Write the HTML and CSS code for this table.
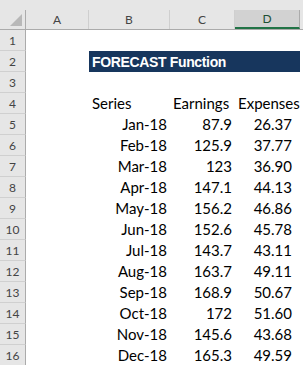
FILE: index.html
```html
<!DOCTYPE html>
<html>
<head>
<meta charset="utf-8">
<link rel="stylesheet" href="styles.css">
</head>
<body>
<div class="sheet">
  <div class="topband"></div>
  <div class="colheads">
    <div class="corner"><span class="tri"></span></div>
    <div class="ch">A</div>
    <div class="ch">B</div>
    <div class="ch">C</div>
    <div class="ch sel">D</div>
    <div class="ch end"></div>
  </div>
  <div class="row"><div class="rh">1</div></div>
  <div class="row"><div class="rh">2</div><div class="cell"></div><div class="banner">FORECAST Function</div></div>
  <div class="row"><div class="rh">3</div></div>
  <div class="row"><div class="rh">4</div><div class="cell"></div><div class="cell">Series</div><div class="cell">Earnings</div><div class="cell">Expenses</div></div>
  <div class="row"><div class="rh">5</div><div class="cell"></div><div class="cell r">Jan-18</div><div class="cell r">87.9</div><div class="cell r d">26.37</div></div>
  <div class="row"><div class="rh">6</div><div class="cell"></div><div class="cell r">Feb-18</div><div class="cell r">125.9</div><div class="cell r d">37.77</div></div>
  <div class="row"><div class="rh">7</div><div class="cell"></div><div class="cell r">Mar-18</div><div class="cell r">123</div><div class="cell r d">36.90</div></div>
  <div class="row"><div class="rh">8</div><div class="cell"></div><div class="cell r">Apr-18</div><div class="cell r">147.1</div><div class="cell r d">44.13</div></div>
  <div class="row"><div class="rh">9</div><div class="cell"></div><div class="cell r">May-18</div><div class="cell r">156.2</div><div class="cell r d">46.86</div></div>
  <div class="row"><div class="rh">10</div><div class="cell"></div><div class="cell r">Jun-18</div><div class="cell r">152.6</div><div class="cell r d">45.78</div></div>
  <div class="row"><div class="rh">11</div><div class="cell"></div><div class="cell r">Jul-18</div><div class="cell r">143.7</div><div class="cell r d">43.11</div></div>
  <div class="row"><div class="rh">12</div><div class="cell"></div><div class="cell r">Aug-18</div><div class="cell r">163.7</div><div class="cell r d">49.11</div></div>
  <div class="row"><div class="rh">13</div><div class="cell"></div><div class="cell r">Sep-18</div><div class="cell r">168.9</div><div class="cell r d">50.67</div></div>
  <div class="row"><div class="rh">14</div><div class="cell"></div><div class="cell r">Oct-18</div><div class="cell r">172</div><div class="cell r d">51.60</div></div>
  <div class="row"><div class="rh">15</div><div class="cell"></div><div class="cell r">Nov-18</div><div class="cell r">145.6</div><div class="cell r d">43.68</div></div>
  <div class="row"><div class="rh">16</div><div class="cell"></div><div class="cell r">Dec-18</div><div class="cell r">165.3</div><div class="cell r d">49.59</div></div>
</div>
</body>
</html>
```
FILE: styles.css
```css
html, body {
  margin: 0;
  padding: 0;
  background: #fff;
  overflow: hidden;
}
.sheet {
  width: 303px;
  height: 365px;
  overflow: hidden;
  font-family: "Lato", "Open Sans", sans-serif;
  color: #000;
}
.topband {
  height: 10px;
  background: #e6e6e6;
}
.colheads {
  display: grid;
  grid-template-columns: 26px 63px 81px 65px 65px 1fr;
  height: 20px;
  background: #e6e6e6;
  border-bottom: 1px solid #ababab;
  box-sizing: border-box;
}
.corner {
  position: relative;
  border-right: 1px solid #ababab;
}
.tri {
  position: absolute;
  right: 3px;
  bottom: 3px;
  width: 0;
  height: 0;
  border-left: 12px solid transparent;
  border-bottom: 12px solid #b8b8b8;
}
.ch {
  display: flex;
  align-items: center;
  justify-content: center;
  font-size: 12px;
  color: #444;
  border-right: 1px solid #cfcfcf;
  box-sizing: border-box;
}
.ch.sel {
  background: #d2d2d2;
  color: #1d4f33;
  border-bottom: 2px solid #217346;
  border-right: 1px solid #ababab;
}
.ch.end {
  border-right: none;
}
.row {
  display: grid;
  grid-template-columns: 26px 63px 81px 65px 65px 1fr;
  height: 21px;
}
.rh {
  background: #e6e6e6;
  border-right: 1px solid #ababab;
  border-bottom: 1px solid #d0d0d0;
  box-sizing: border-box;
  display: flex;
  align-items: center;
  justify-content: center;
  font-size: 12px;
  color: #444;
  padding-top: 1px;
}
.cell {
  display: flex;
  align-items: flex-end;
  padding: 0 3px 2px 3px;
  font-size: 15px;
  line-height: 17px;
  white-space: nowrap;
  overflow: visible;
}
.cell.r {
  justify-content: flex-end;
}
.cell.d {
  padding-right: 8px;
}
.banner {
  grid-column: 3 / 6;
  background: #17365d;
  color: #fff;
  font-family: "Liberation Sans", Arial, sans-serif;
  font-weight: bold;
  font-size: 14px;
  letter-spacing: -0.35px;
  display: flex;
  align-items: center;
  padding-left: 3px;
  padding-top: 1px;
}
```
